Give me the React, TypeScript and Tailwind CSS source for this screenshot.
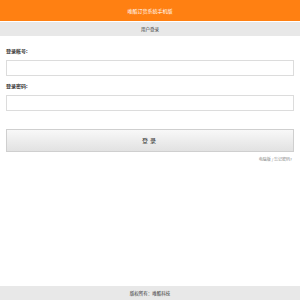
import React from 'react';

const Field: React.FC<{ label: string; type?: string }> = ({ label, type = 'text' }) => (
    <div className="flex flex-col">
        <label className="text-[5px] font-bold text-[#333] leading-[8px] h-[8px] mb-[5px]">{label}</label>
        <input
            type={type}
            className="h-[16px] w-full border border-[#dcdcdc] bg-white outline-none"
        />
    </div>
);

export default function App() {
    return (
        <div className="w-[300px] h-[300px] bg-white flex flex-col font-['Noto_Sans_CJK_SC',sans-serif]">
            <div className="h-[21px] bg-[#ff8012] flex items-center justify-center text-white text-[5px] leading-none">
                唯酷订货系统手机版
            </div>
            <div className="h-[14px] mt-[1px] bg-[#e8e8e8] flex items-center justify-center text-[#333] text-[4.5px] leading-none">
                用户登录
            </div>

            <div className="px-[6px] pt-[11px] flex flex-col gap-[6px]">
                <Field label="登录帐号:" />
                <Field label="登录密码:" type="password" />
            </div>

            <div className="px-[6px] pt-[18px]">
                <button className="w-full h-[23px] border border-[#cfcfcf] bg-gradient-to-b from-[#f8f8f8] to-[#e2e2e2] text-[#333] text-[6px] tracking-[2px] flex items-center justify-center">
                    登录
                </button>
                <div className="mt-[5px] text-right text-[4px] text-[#888] leading-none pr-[2px]">
                    电脑版 / 忘记密码?
                </div>
            </div>

            <div className="mt-auto h-[14px] bg-[#e8e8e8] flex items-center justify-center text-[#333] text-[4.5px] leading-none">
                版权所有：唯酷科技
            </div>
        </div>
    );
}
